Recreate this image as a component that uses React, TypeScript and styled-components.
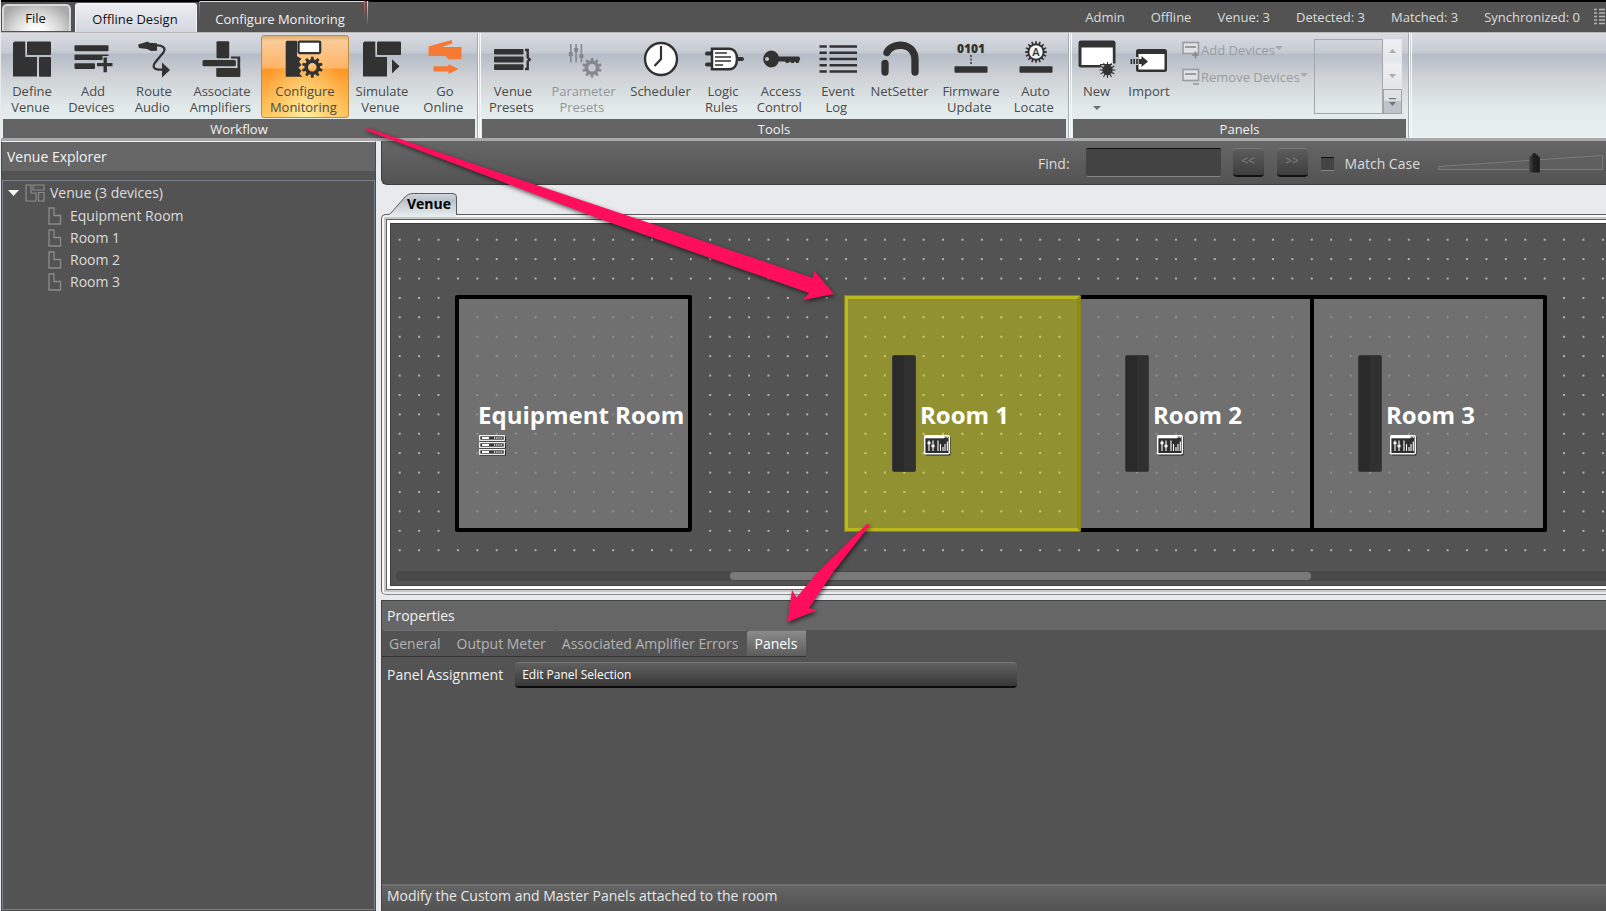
import React from "react";
import styled, { createGlobalStyle, css } from "styled-components";

const Global = createGlobalStyle`
  *, *::before, *::after { box-sizing: border-box; }
  html, body, #root { height: 100%; }
  body {
    margin: 0;
    overflow: hidden;
    background: #e8eaed;
    color: #e4e4e4;
    font: 14px/20px "Open Sans", "Noto Sans", sans-serif;
  }
  button, input { font: inherit; color: inherit; margin: 0; }
`;

const ink = "#323232";

/* ---------- shell ---------- */

const Shell = styled.div`
  position: relative;
  display: flex;
  flex-direction: column;
  min-height: 100vh;
  padding-left: 1px;
  overflow: hidden;
`;

const TitleBar = styled.header`
  display: flex;
  align-items: flex-end;
  height: 33px;
  padding-left: 1px;
  background: #535353;
  border-top: 2px solid #000;
  border-bottom: 1px solid #b9b9b9;
`;

const FileButton = styled.button`
  width: 69px;
  height: 27px;
  margin: 0 4px 1px 0;
  padding: 0 2px 2px 0;
  color: #111;
  font-size: 13px;
  border: 2px solid #d8d8d8;
  border-bottom: 0;
  border-radius: 5px 5px 0 0;
  background: radial-gradient(ellipse at 50% 110%, #fff 15%, #d4d4d4 55%, #a9a9a9 85%);
`;

const RibbonTab = styled.button<{ $active?: boolean }>`
  width: ${(p) => (p.$active ? 122 : 170)}px;
  height: ${(p) => (p.$active ? 29 : 31)}px;
  padding: 2px 2px 0 0;
  font-size: 13px;
  border: 0;
  ${(p) =>
    p.$active
      ? css`
          color: #111;
          border: 1px solid #f5f5f7;
          border-bottom: 0;
          border-radius: 3px 3px 0 0;
          background: linear-gradient(#eceef2, #d4d7df);
        `
      : css`
          padding: 4px 8px 0 0;
          margin-left: 2px;
          color: #f2f2f2;
          background:
            linear-gradient(#e0604e, #53535300 60%) 0 0 / 1px 100% no-repeat,
            linear-gradient(#e0604e, #53535300 60%) 165px 0 / 1px 100% no-repeat,
            linear-gradient(#ddd, #53535300 80%) 168px 0 / 1px 100% no-repeat,
            linear-gradient(#f6cfc6, #f6cfc6) 0 0 / 166px 1px no-repeat,
            #535353;
        `}
`;

const Status = styled.ul`
  display: flex;
  align-items: center;
  gap: 26px;
  height: 30px;
  margin: 0 0 0 auto;
  padding: 0;
  list-style: none;
  font-size: 13px;
  color: #dcdcdc;
  white-space: nowrap;
  svg { display: block; margin-left: -12px; }
`;

/* ---------- ribbon ---------- */

const Ribbon = styled.nav`
  display: flex;
  height: 108px;
  padding-left: 2px;
  border-bottom: 3px solid #a9a9a9;
  background: linear-gradient(#d9dbe1 0, #c5cad2 20px, #b5bcc7 21px, #cfd3d6 45px, #e2eaea 75px, #e8f1f1 105px);
`;

const Group = styled.section`
  display: flex;
  flex-direction: column;
  flex: none;
`;

const GroupBody = styled.div`
  display: flex;
  align-items: flex-start;
  height: 86px;
  padding-top: 2px;
`;

const GroupTitle = styled.h2`
  height: 19px;
  margin: 0;
  background: #646464;
  color: #f2f2f2;
  font-size: 13px;
  font-weight: 400;
  line-height: 20px;
  text-align: center;
`;

const Divider = styled.div`
  flex: none;
  width: 7px;
  background: linear-gradient(90deg, #0000 2px, #a5a8ad 2px 3px, #fff 3px 4px, #0000 4px 5px, #f7fafa 5px 6px, #0000 6px);
`;

const ToolButton = styled.button<{ $width: number; $on?: boolean }>`
  display: flex;
  flex-direction: column;
  align-items: center;
  gap: 5px;
  width: ${(p) => p.$width}px;
  height: 83px;
  padding: ${(p) => (p.$on ? 4 : 5)}px 0 0;
  border: 0;
  background: none;
  color: #4a4a4a;
  font-size: 13px;
  line-height: 16px;
  white-space: nowrap;
  &:disabled { color: #94979a; }
  ${(p) =>
    p.$on &&
    css`
      border: 1px solid #c08c3e;
      border-radius: 3px;
      background:
        radial-gradient(ellipse at 50% 110%, #fff3a8 0, #ffe08a88 35%, #fff0 70%),
        linear-gradient(#dcae70 0, #fbcb98 5px, #fdb266 32px, #fb9526 33px, #fda83e 60%, #ffc861 100%);
    `}
  svg { display: block; flex: none; overflow: visible; }
`;

const Caret = styled.i<{ $muted?: boolean }>`
  margin-top: 2px;
  border: 4px solid transparent;
  border-top-color: ${(p) => (p.$muted ? "#a8abae" : "#707070")};
  border-bottom: 0;
`;

const SmallTools = styled.div`
  display: flex;
  flex-direction: column;
  gap: 7px;
  width: 136px;
  padding: 5px 0 0 4px;
`;

const SmallTool = styled.button`
  display: flex;
  align-items: center;
  height: 20px;
  padding: 0;
  border: 0;
  background: none;
  color: #9a9da0;
  font-size: 13px;
  white-space: nowrap;
  svg { margin-right: 1px; flex: none; }
  i { margin-top: -4px; }
`;

const Gallery = styled.div`
  display: grid;
  grid-template-columns: 69px 19px;
  grid-template-rows: 24px 26px 25px;
  margin: 4px 4px 0 0;
`;

const GalleryView = styled.div`
  grid-row: 1 / 4;
  border: 1px solid #a4a7ab;
`;

const GalleryButton = styled.button<{ $strong?: boolean }>`
  display: flex;
  align-items: center;
  justify-content: center;
  padding: 0;
  border: 1px solid ${(p) => (p.$strong ? "#a0a4aa" : "#e4e9f2")};
  background: ${(p) => (p.$strong ? "linear-gradient(#dfe1e4 45%, #bfc4ca 50%)" : "linear-gradient(#eff0f3, #e2e5e9)")};
`;

/* ---------- workspace ---------- */

const Workspace = styled.div`
  display: flex;
  flex: 1;
  min-height: 0;
  gap: 5px;
`;

const Explorer = styled.aside`
  display: flex;
  flex-direction: column;
  flex: none;
  width: 375px;
  border: 1px solid #4a4a4a;
  border-top-color: #f0f0f0;
  background: #535353;
`;

const PanelTitle = styled.h2`
  height: 29px;
  margin: 0;
  padding: 0 5px;
  background: #666;
  color: #f4f4f4;
  font-size: 14px;
  font-weight: 400;
  line-height: 29px;
`;

const Tree = styled.ul`
  flex: 1;
  margin: 9px 0 0;
  padding: 0;
  list-style: none;
  border: 1px solid #77808a;
`;

const TreeItem = styled.li<{ $child?: boolean }>`
  display: flex;
  align-items: center;
  height: ${(p) => (p.$child ? 22 : 24)}px;
  padding-left: ${(p) => (p.$child ? 45 : 5)}px;
  color: #dedede;
  font-size: 14px;
  svg { flex: none; margin-right: ${(p) => (p.$child ? 8 : 5)}px; }
`;

const Twisty = styled.button`
  width: 11px;
  height: 6px;
  margin-right: 6px;
  padding: 0;
  border: 0;
  background: #f4f4f4;
  clip-path: polygon(0 0, 100% 0, 50% 100%);
`;

const Main = styled.main`
  display: flex;
  flex: 1;
  flex-direction: column;
  min-width: 0;
`;

const FindBar = styled.form`
  display: flex;
  align-items: center;
  justify-content: flex-end;
  height: 44px;
  padding-right: 3px;
  border: 1px solid #3e3e3e;
  border-width: 0 0 1px 1px;
  border-radius: 0 0 0 6px;
  background: linear-gradient(#666, #535353);
  label { padding-top: 3px; color: #dcdcdc; white-space: nowrap; }
`;

const FindInput = styled.input`
  width: 135px;
  height: 29px;
  margin: 0 12px 0 16px;
  border: 0;
  border-top: 1px solid #111;
  border-bottom: 1px solid #858585;
  border-radius: 2px;
  background: #434343;
`;

const StepButton = styled.button`
  width: 31px;
  height: 29px;
  margin-right: 13px;
  padding: 0 0 2px;
  border: 0;
  border-top: 1px solid #777;
  border-bottom: 2px solid #111;
  border-radius: 4px;
  background: linear-gradient(#5c5c5c, #3e3e3e);
  color: #828282;
  font-size: 12px;
  line-height: 20px;
`;

const Check = styled.input`
  appearance: none;
  width: 13px;
  height: 14px;
  margin: 2px 11px 0 0;
  border-top: 1px solid #111;
  border-bottom: 1px solid #858585;
  background: #434343;
`;

const Zoom = styled.div`
  position: relative;
  width: 165px;
  height: 20px;
  margin-left: 18px;
  svg { position: absolute; left: 0; top: 0; }
`;

const ZoomRange = styled.input`
  position: absolute;
  inset: 0;
  width: 100%;
  height: 20px;
  appearance: none;
  background: none;
  &::-webkit-slider-thumb {
    appearance: none;
    width: 11px;
    height: 20px;
    background: linear-gradient(90deg, #4c4c4c, #222 40%, #1a1a1a);
    clip-path: polygon(50% 0, 100% 25%, 100% 100%, 0 100%, 0 25%);
  }
`;

const TabStrip = styled.div`
  display: flex;
  align-items: flex-end;
  height: 29px;
  padding-left: 6px;
`;

const VenueTab = styled.button`
  position: relative;
  z-index: 1;
  width: 71px;
  height: 24px;
  margin-bottom: -3px;
  padding: 0 7px 2px 0;
  border: 0;
  background: none;
  color: #000;
  font-size: 14px;
  font-weight: 700;
  text-align: right;
  svg { position: absolute; left: 0; top: 0; z-index: -1; }
`;

const Frame = styled.div`
  flex: none;
  padding: 4px 0 4px 4px;
  border: 1px solid #5e5e5e;
  border-right: 0;
  border-bottom-color: #8a8c90;
  border-radius: 5px 0 0 5px;
  background:
    linear-gradient(90deg, #f6f6f6 2px, #0000 2px),
    linear-gradient(#f6f6f6 2px, #c9c9c9 2px calc(100% - 2px), #ececec calc(100% - 2px));
  margin-bottom: 5px;
`;

const InnerFrame = styled.div`
  padding: 3px 0 3px 3px;
  border: 1px solid #5e5e5e;
  border-right: 0;
  background: #fff;
`;

const Canvas = styled.div`
  position: relative;
  height: 363px;
  overflow: hidden;
  background: #535353;
  border: 1px solid #3f3f3f;
  border-right: 0;
`;

const Dots = styled.div`
  position: absolute;
  inset: 6px 0 24px 0;
  --step: calc(233px / 12);
  background: radial-gradient(circle at 50% 50%, #c4c4c4 0, #b0b0b0 1px, #0000 1px) -1px 0 / var(--step) var(--step);
`;

const RoomBox = styled.div<{ $x: number; $selected?: boolean }>`
  position: absolute;
  left: ${(p) => p.$x}px;
  top: 71px;
  width: 237px;
  height: 237px;
  border: 4px solid #000;
  border-radius: 2px;
  background: rgba(127, 127, 127, 0.65);
  background-clip: padding-box;
  color: #fff;
  ${(p) =>
    p.$selected &&
    css`
      z-index: 1;
      border-color: #b9b91e #8f8f00 #b9b91e #b9b91e;
      outline: 1px solid #83831f;
      outline-offset: -1px;
      background: rgba(240, 240, 0, 0.4);
      background-clip: padding-box;
    `}
`;

const RoomCaption = styled.div<{ $indent: number }>`
  position: absolute;
  left: ${(p) => p.$indent}px;
  top: 100px;
  font-size: 24px;
  font-weight: 700;
  line-height: 32px;
  white-space: nowrap;
  svg { display: block; margin: 4px 0 0 ${(p) => (p.$indent > 50 ? 4 : 1)}px; }
`;

const Speaker = styled.div`
  position: absolute;
  left: 44px;
  top: 56px;
  width: 24px;
  height: 117px;
  border: 1px solid #3a3a3a;
  border-radius: 2px;
  background: linear-gradient(90deg, #2a2a2a 50%, #303030 50%);
`;

const ScrollTrack = styled.div`
  position: absolute;
  left: 5px;
  right: 0;
  bottom: 4px;
  height: 10px;
  border-radius: 4px 0 0 4px;
  background: #494949;
`;

const ScrollThumb = styled.div`
  position: absolute;
  left: 334px;
  top: 1px;
  width: 581px;
  height: 8px;
  border-radius: 4px;
  background: #797979;
`;

const Properties = styled.section`
  display: flex;
  flex: 1;
  flex-direction: column;
  border: 1px solid #444;
  border-width: 1px 0 0 1px;
  background: #535353;
`;

const PropTabs = styled.div`
  display: flex;
  align-self: flex-start;
  height: 27px;
  border-bottom: 1px solid #333;
`;

const PropTab = styled.button<{ $active?: boolean }>`
  padding: 0 9px 0 7px;
  border: 0;
  border-top: 1px solid #6c6c6c;
  border-radius: 3px 0 0 0;
  background: ${(p) => (p.$active ? "linear-gradient(#8b8b8b, #5c5c5c)" : "none")};
  color: ${(p) => (p.$active ? "#fff" : "#b4b4b4")};
  font-size: 14px;
  white-space: nowrap;
`;

const PropRow = styled.div`
  display: flex;
  align-items: center;
  gap: 12px;
  padding: 5px 5px 0;
  color: #f0f0f0;
`;

const AssignButton = styled.button`
  width: 502px;
  height: 26px;
  padding: 0 7px;
  border: 0;
  border-top: 1px solid #777;
  border-bottom: 2px solid #0c0c0c;
  border-radius: 4px;
  background: linear-gradient(#606060, #383838);
  color: #fff;
  font-size: 12px;
  text-align: left;
`;

const HintBar = styled.footer`
  height: 27px;
  margin-top: auto;
  padding: 0 5px;
  border-top: 2px solid #707070;
  background: linear-gradient(#646464, #525252);
  color: #e8e8e8;
  line-height: 20px;
`;

const Annotations = styled.svg`
  position: absolute;
  left: 0;
  top: 0;
  z-index: 5;
  pointer-events: none;
  filter: drop-shadow(1px 2px 2px rgba(0, 0, 0, 0.6));
`;

/* ---------- drawings ---------- */

function gearPath(cx: number, cy: number, outer: number, inner: number, teeth: number, hole = 0, flat = 0.25) {
  const pts: string[] = [];
  const step = (Math.PI * 2) / teeth;
  const at = (r: number, a: number) => `${(cx + r * Math.cos(a)).toFixed(2)} ${(cy + r * Math.sin(a)).toFixed(2)}`;
  for (let i = 0; i < teeth; i++) {
    const a = i * step - Math.PI / 2;
    pts.push(at(inner, a - step * (flat + 0.08)), at(outer, a - step * flat * 0.75), at(outer, a + step * flat * 0.75), at(inner, a + step * (flat + 0.08)));
  }
  const ring = hole ? `M${cx - hole} ${cy}a${hole} ${hole} 0 1 0 ${hole * 2} 0a${hole} ${hole} 0 1 0 ${-hole * 2} 0z` : "";
  return `M${pts.join("L")}z${ring}`;
}

const Icon = ({ children }: { children: React.ReactNode }) => (
  <svg width="40" height="38" viewBox="0 0 40 38" fill={ink} aria-hidden="true">
    {children}
  </svg>
);

const icons: Record<string, React.ReactNode> = {
  define: (
    <Icon>
      <path d="M2.500 1.500H13.300v15.500H25v19.500H1V3z" />
      <rect x="15" y="1.500" width="24" height="13.500" rx="1" />
      <rect x="27" y="17" width="12" height="19.700" rx="1" />
    </Icon>
  ),
  add: (
    <Icon>
      <rect x="1.500" y="5.300" width="34" height="6" rx="1" />
      <path d="M1.500 14.500h34v1.500h-6v4h-28z" />
      <rect x="1.500" y="23.300" width="20.500" height="5.700" rx="1" />
      <path d="M30.500 17.500h3.400v5.400h5.600v3.400h-5.600v6h-3.400v-6h-6.500v-3.400h6.500z" />
    </Icon>
  ),
  route: (
    <Icon>
      <path d="M4 4.500 14 1.500l1 1.200 8 .6v7.400l-6 .3-4-2-8-1z" />
      <path d="M22 5.500c6-.5 11 2.500 7 7.500l-7.500 9c-4 5-1.500 8.500 7.500 7.500" fill="none" stroke={ink} strokeWidth="2.200" />
      <path d="M28 22.500 36 30l-8 7.500z" />
    </Icon>
  ),
  associate: (
    <Icon>
      <rect x="14.500" y="1.300" width="12.700" height="17" rx="1" />
      <path d="M29 16.500h9.200v20.200H14.500V28h21V18.500H29z" />
      <rect x="14.500" y="28" width="23.700" height="8.700" rx="1" />
      <rect x=".5" y="20" width="33.300" height="6.300" rx="1.500" />
    </Icon>
  ),
  configure: (
    <Icon>
      <path d="M1.700.7H12v15.500l4.500 2.500-2.500 3 2.500 3-3 3 3 3-2 3 3 3H.7V2z" />
      <rect x="13.600" y="1.600" width="21.600" height="11.500" rx="1" fill="#fff" stroke={ink} strokeWidth="2.200" />
      <path fillRule="evenodd" d={gearPath(27.3, 27.2, 10.5, 7.8, 10, 4.3)} />
    </Icon>
  ),
  simulate: (
    <Icon>
      <path d="M2.500 1.500H13.300v15.500H25v19.500H1V3z" />
      <rect x="15" y="1.500" width="24" height="13.500" rx="1" />
      <path d="M30 19.300 37.500 26.300 30 33.500z" />
    </Icon>
  ),
  online: (
    <Icon>
      <g fill="#f47a36">
        <path d="M3.500 6.500 26.500 0l1.300 3.200L17 7h19.500v12.300H23.500l-3-3.300h-17z" />
        <path d="M8.500 26.300h15V24l10 5-10 5v-2.500h-15z" />
      </g>
    </Icon>
  ),
  presets: (
    <Icon>
      <rect x="1" y="9" width="29.500" height="5.600" rx="1" />
      <rect x="1" y="16.500" width="29.500" height="6" rx="1" />
      <rect x="1" y="24.300" width="29.500" height="5.700" rx="1" />
      <path d="M32 10h2.700v7.500l2 2-2 2V29H32" fill="none" stroke={ink} strokeWidth="2.400" />
    </Icon>
  ),
  parameter: (
    <Icon>
      <g fill="#85888c">
        <path d="M6 4h1.600v18.500H6zM11.300 4h1.600v18.500h-1.600zM16.600 4h1.600v18.500h-1.600zM4.800 12h4v4h-4zM10.100 8h4v4h-4zM15.400 14h4v4h-4z" />
        <path fillRule="evenodd" d={gearPath(28, 27.7, 9.8, 7.3, 10, 3.7)} />
      </g>
    </Icon>
  ),
  scheduler: (
    <Icon>
      <circle cx="20" cy="19" r="16" fill="#fff" stroke={ink} strokeWidth="2.400" />
      <path d="M20 6v13l-6.500 7" fill="none" stroke={ink} strokeWidth="2.200" />
    </Icon>
  ),
  logic: (
    <Icon>
      <path d="M4 13.500h6M4 24.500h6M34 19h5" stroke={ink} strokeWidth="4" strokeLinecap="round" />
      <path d="M9 8.700h17c5.500 0 8 4.500 8 10.300s-2.500 10.300-8 10.300H9z" fill="#fff" stroke={ink} strokeWidth="2.500" />
      <path d="M12 13h12M12 17h16M12 21h16M12 25h8" stroke={ink} strokeWidth="1.600" />
    </Icon>
  ),
  access: (
    <Icon>
      <path fillRule="evenodd" d="M9.500 10.500c5 0 7.500 3 8.200 6H38l1.200 2-1.700 4.500h-2.200l-1.300-1.500-1.500 1.500h-2l-1.500-1.500-1.700 1.500h-2l-1.500-1.500H17.700c-.7 3-3.500 6-8.200 6a8.600 8.600 0 0 1 0-17zM6 17a2 2 0 1 0 .1 0z" />
    </Icon>
  ),
  log: (
    <Icon>
      <path d="M1.500 6.500h7.300M11.500 6.500h27.500M1.500 12.700h7.300M11.500 12.700h27.500M1.500 19h7.300M11.500 19h27.500M1.500 25.200h7.300M11.500 25.200h27.500M1.500 31.500h7.300M11.500 31.500h27.500" stroke={ink} strokeWidth="2.500" />
    </Icon>
  ),
  net: (
    <Icon>
      <path d="M7 12.500C11 2.500 35 1 35 20v12M5 23.500V32" fill="none" stroke={ink} strokeWidth="7.300" strokeLinecap="round" />
    </Icon>
  ),
  firmware: (
    <Icon>
      <text x="20" y="13" textAnchor="middle" fontSize="12" fontWeight="800">0101</text>
      <path d="M20 15v10" stroke={ink} strokeWidth="1.400" strokeDasharray="2 1.500" />
      <rect x="3.500" y="26.300" width="33" height="6.500" rx="1" />
    </Icon>
  ),
  auto: (
    <Icon>
      <path d={gearPath(20, 12, 11, 8.5, 16, 0, 0.2)} />
      <circle cx="20" cy="12" r="6.700" fill="#f2f3f5" />
      <text x="20" y="16" textAnchor="middle" fontSize="11" fontWeight="600">A</text>
      <rect x="3.500" y="26.300" width="33" height="6.500" rx="1" />
    </Icon>
  ),
  create: (
    <Icon>
      <path d="M4 .5h32a2.500 2.500 0 0 1 2.500 2.500v20.500H35V27H23.500v.5H4A2.500 2.500 0 0 1 1.500 25V3A2.500 2.500 0 0 1 4 .5z" />
      <path d="M4.500 7.500h31.300V24H23v1H4.500z" fill="#fff" />
      <path d="M24 25h11v3H24z" fill="#bcc2cb" />
      <path d={gearPath(30.5, 30, 8, 5.2, 12, 0, 0.15)} />
    </Icon>
  ),
  load: (
    <Icon>
      <rect x="7" y="9" width="31" height="23" rx="2.500" />
      <rect x="9.500" y="14" width="26" height="15.500" fill="#fff" />
      <path d="M6 17h3v8H6z" fill="#c2c7cf" />
      <path d="M1.500 19h1.700v5H1.500zM4.300 19H6v5H4.300zM7.100 19h1.700v5H7.100zM10 19h2.500v-3l6.500 5.500-6.500 5.500v-3H10z" />
    </Icon>
  ),
};

const DeviceIcon = ({ plus }: { plus?: boolean }) => (
  <svg width="18" height="18" viewBox="0 0 18 18" fill="none" stroke="#9a9da0" strokeWidth="1.600" aria-hidden="true">
    <rect x="1" y="1.500" width="15.500" height="11" fill="#dfe1e5" />
    <path d="M3 6h11" strokeWidth="2" />
    {plus ? <path d="M10 14h7M13.500 10.500v7" stroke="#85888c" /> : <path d="M11 16h6" />}
  </svg>
);

const VenueIcon = () => (
  <svg width="20" height="18" viewBox="0 0 20 18" fill="none" stroke="#8c8c8c" strokeWidth="1.200" aria-hidden="true">
    <path d="M1 1h5v8h5v8H1zM8 1h11v5H8zM13.500 8.500H19V17h-5.500z" />
  </svg>
);

const RoomIcon = () => (
  <svg width="14" height="18" viewBox="0 0 14 18" fill="none" stroke="#8c8c8c" strokeWidth="1.300" aria-hidden="true">
    <path d="M1 1h5v7.500h6.500V17H1z" />
  </svg>
);

const RackIcon = () => (
  <svg width="27" height="21" viewBox="0 0 27 21" aria-hidden="true">
    {[0, 7, 14].map((y) => (
      <g key={y}>
        <rect x="1" y={y + 1.3} width="26" height="5.200" fill="#222" />
        <rect x=".7" y={y + 0.7} width="24.600" height="4.600" fill="#333" stroke="#fff" strokeWidth="1.200" />
        <path d={`M3 ${y + 3}h7`} stroke="#fff" strokeWidth="2" />
        <path d={`M15 ${y + 3}h9`} stroke="#fff" strokeWidth="1.500" strokeDasharray="1.200 1" />
      </g>
    ))}
  </svg>
);

const MixerIcon = () => (
  <svg width="27" height="21" viewBox="0 0 27 21" aria-hidden="true">
    <rect x="1.500" y="1.500" width="25" height="19" rx="1" fill="#222" />
    <rect x=".7" y=".7" width="24.600" height="18" rx="1" fill="#2e2e2e" stroke="#fff" strokeWidth="1.400" />
    <path d="M1 1.800h19" stroke="#fff" strokeWidth="3" />
    <path d="M20 2h1.500M22.500 2H24" stroke="#ccc" strokeWidth="2" />
    <path d="M5 5.500v10.500M9 5.500v10.500M14 5.500v10.500M16.500 9v7M19 12v4M21 9v7M23.300 6.500v9.500" stroke="#fff" strokeWidth="1.100" />
    <path d="M3.500 8h3M7.500 11h3" stroke="#fff" strokeWidth="2.600" />
  </svg>
);

/* ---------- data ---------- */

interface Tool {
  icon: string;
  label: [string, string?];
  width: number;
  on?: boolean;
  disabled?: boolean;
  menu?: boolean;
}

const workflow: Tool[] = [
  { icon: "define", label: ["Define", "Venue"], width: 58 },
  { icon: "add", label: ["Add", "Devices"], width: 64 },
  { icon: "route", label: ["Route", "Audio"], width: 58 },
  { icon: "associate", label: ["Associate", "Amplifiers"], width: 78 },
  { icon: "configure", label: ["Configure", "Monitoring"], width: 88, on: true },
  { icon: "simulate", label: ["Simulate", "Venue"], width: 66 },
  { icon: "online", label: ["Go", "Online"], width: 60 },
];

const tools: Tool[] = [
  { icon: "presets", label: ["Venue", "Presets"], width: 62 },
  { icon: "parameter", label: ["Parameter", "Presets"], width: 79, disabled: true },
  { icon: "scheduler", label: ["Scheduler"], width: 75 },
  { icon: "logic", label: ["Logic", "Rules"], width: 50 },
  { icon: "access", label: ["Access", "Control"], width: 66 },
  { icon: "log", label: ["Event", "Log"], width: 48 },
  { icon: "net", label: ["NetSetter"], width: 75 },
  { icon: "firmware", label: ["Firmware", "Update"], width: 68 },
  { icon: "auto", label: ["Auto", "Locate"], width: 61 },
];

const panels: Tool[] = [
  { icon: "create", label: ["New"], width: 47, menu: true },
  { icon: "load", label: ["Import"], width: 58 },
];

const rooms = [
  { name: "Equipment Room", x: 64, kind: "rack" },
  { name: "Room 1", x: 453, kind: "mixer", selected: true },
  { name: "Room 2", x: 686, kind: "mixer" },
  { name: "Room 3", x: 919, kind: "mixer" },
];

const ToolList = ({ items }: { items: Tool[] }) => (
  <>
    {items.map((t) => (
      <ToolButton key={t.icon} type="button" $width={t.width} $on={t.on} disabled={t.disabled}>
        {icons[t.icon]}
        <span>
          {t.label[0]}
          {t.label[1] && (
            <>
              <br />
              {t.label[1]}&nbsp;
            </>
          )}
        </span>
        {t.menu && <Caret />}
      </ToolButton>
    ))}
  </>
);

export default function App() {
  return (
    <Shell>
      <Global />
      <TitleBar>
        <FileButton type="button">File</FileButton>
        <RibbonTab type="button" $active>Offline Design</RibbonTab>
        <RibbonTab type="button">Configure Monitoring</RibbonTab>
        <Status>
          <li>Admin</li>
          <li>Offline</li>
          <li>Venue: 3</li>
          <li>Detected: 3</li>
          <li>Matched: 3</li>
          <li>Synchronized: 0</li>
          <li>
            <svg width="11" height="18" viewBox="0 0 11 18" aria-hidden="true">
              <path d="M0 1.500h3M5 1.500h6M0 5h3M5 5h6M0 8.500h3M5 8.500h6M0 12h3M5 12h6M0 15.500h3M5 15.500h6" stroke="#b4b4b4" strokeWidth="1.500" />
            </svg>
          </li>
        </Status>
      </TitleBar>

      <Ribbon aria-label="Ribbon">
        <Group>
          <GroupBody><ToolList items={workflow} /></GroupBody>
          <GroupTitle>Workflow</GroupTitle>
        </Group>
        <Divider />
        <Group>
          <GroupBody><ToolList items={tools} /></GroupBody>
          <GroupTitle>Tools</GroupTitle>
        </Group>
        <Divider />
        <Group>
          <GroupBody>
            <ToolList items={panels} />
            <SmallTools>
              <SmallTool type="button"><DeviceIcon plus />Add Devices<Caret $muted /></SmallTool>
              <SmallTool type="button"><DeviceIcon />Remove Devices<Caret $muted /></SmallTool>
            </SmallTools>
            <Gallery>
              <GalleryView />
              <GalleryButton type="button" aria-label="Scroll up">
                <svg width="7" height="4"><path d="M0 4h7L3.500 0z" fill="#a9acb0" /></svg>
              </GalleryButton>
              <GalleryButton type="button" aria-label="Scroll down">
                <svg width="7" height="4"><path d="M0 0h7L3.500 4z" fill="#a9acb0" /></svg>
              </GalleryButton>
              <GalleryButton type="button" aria-label="More" $strong>
                <svg width="7" height="8"><path d="M0 0h7v1.200H0zM0 4h7L3.500 8z" fill="#777" /></svg>
              </GalleryButton>
            </Gallery>
          </GroupBody>
          <GroupTitle>Panels</GroupTitle>
        </Group>
        <Divider />
      </Ribbon>

      <Workspace>
        <Explorer>
          <PanelTitle>Venue Explorer</PanelTitle>
          <Tree>
            <TreeItem>
              <Twisty type="button" aria-label="Collapse" />
              <VenueIcon />
              Venue (3 devices)
            </TreeItem>
            {rooms.map((r) => (
              <TreeItem key={r.name} $child>
                <RoomIcon />
                {r.name}
              </TreeItem>
            ))}
          </Tree>
        </Explorer>

        <Main>
          <FindBar>
            <label htmlFor="find">Find:</label>
            <FindInput id="find" type="text" />
            <StepButton type="button">&lt;&lt;</StepButton>
            <StepButton type="button">&gt;&gt;</StepButton>
            <Check id="match" type="checkbox" />
            <label htmlFor="match">Match Case</label>
            <Zoom>
              <svg width="165" height="20" viewBox="0 0 165 20" aria-hidden="true">
                <path d="M.5 16.500v-3L164.500 2.500v14z" fill="#5f5f5f" stroke="#7a7a7a" />
              </svg>
              <ZoomRange type="range" aria-label="Zoom" min={0} max={100} defaultValue={59} />
            </Zoom>
          </FindBar>

          <TabStrip>
            <VenueTab type="button">
              <svg width="71" height="24" viewBox="0 0 71 24" aria-hidden="true">
                <defs>
                  <linearGradient id="tab" x1="0" y1="0" x2="0" y2="1">
                    <stop offset="0" stopColor="#d3d6dd" />
                    <stop offset=".3" stopColor="#b9c0ca" />
                    <stop offset="1" stopColor="#e9f0f0" />
                  </linearGradient>
                </defs>
                <path d="M0 24v-2.500c2 0 3-.5 4-1.500L18 4C20.500 1.500 23 .5 26 .5h40q3.500 0 3.500 3.500v20z" fill="url(#tab)" />
                <path d="M0 21.500c2 0 3-.5 4-1.500L18 4C20.500 1.500 23 .5 26 .5h40q3.500 0 3.500 3.500v18" fill="none" stroke="#5e5e5e" />
              </svg>
              Venue
            </VenueTab>
          </TabStrip>

          <Frame>
            <InnerFrame>
              <Canvas>
                <Dots />
                {rooms.map((r) => (
                  <RoomBox key={r.name} $x={r.x} $selected={r.selected}>
                    {r.kind === "mixer" && <Speaker />}
                    <RoomCaption $indent={r.kind === "mixer" ? 72 : 19}>
                      {r.name}
                      {r.kind === "mixer" ? <MixerIcon /> : <RackIcon />}
                    </RoomCaption>
                  </RoomBox>
                ))}
                <ScrollTrack><ScrollThumb /></ScrollTrack>
              </Canvas>
            </InnerFrame>
          </Frame>

          <Properties>
            <PanelTitle>Properties</PanelTitle>
            <PropTabs>
              <PropTab type="button">General</PropTab>
              <PropTab type="button">Output Meter</PropTab>
              <PropTab type="button">Associated Amplifier Errors</PropTab>
              <PropTab type="button" $active>Panels</PropTab>
            </PropTabs>
            <PropRow>
              <span>Panel Assignment</span>
              <AssignButton type="button">Edit Panel Selection</AssignButton>
            </PropRow>
            <HintBar>Modify the Custom and Master Panels attached to the room</HintBar>
          </Properties>
        </Main>
      </Workspace>

      <Annotations width="900" height="640" viewBox="0 0 900 640" fill="#ff0f5b" aria-hidden="true">
        <path d="M366 127.500 520 179.500 813 278 814 270.500 834 294 803 300 809 293 600 219 495 179 367 130.500z" />
        <path d="M870 525 834 571 809 608 816.500 610.500 787.500 622 792 590 796.500 597.500 817 573 867 524z" />
      </Annotations>
    </Shell>
  );
}
